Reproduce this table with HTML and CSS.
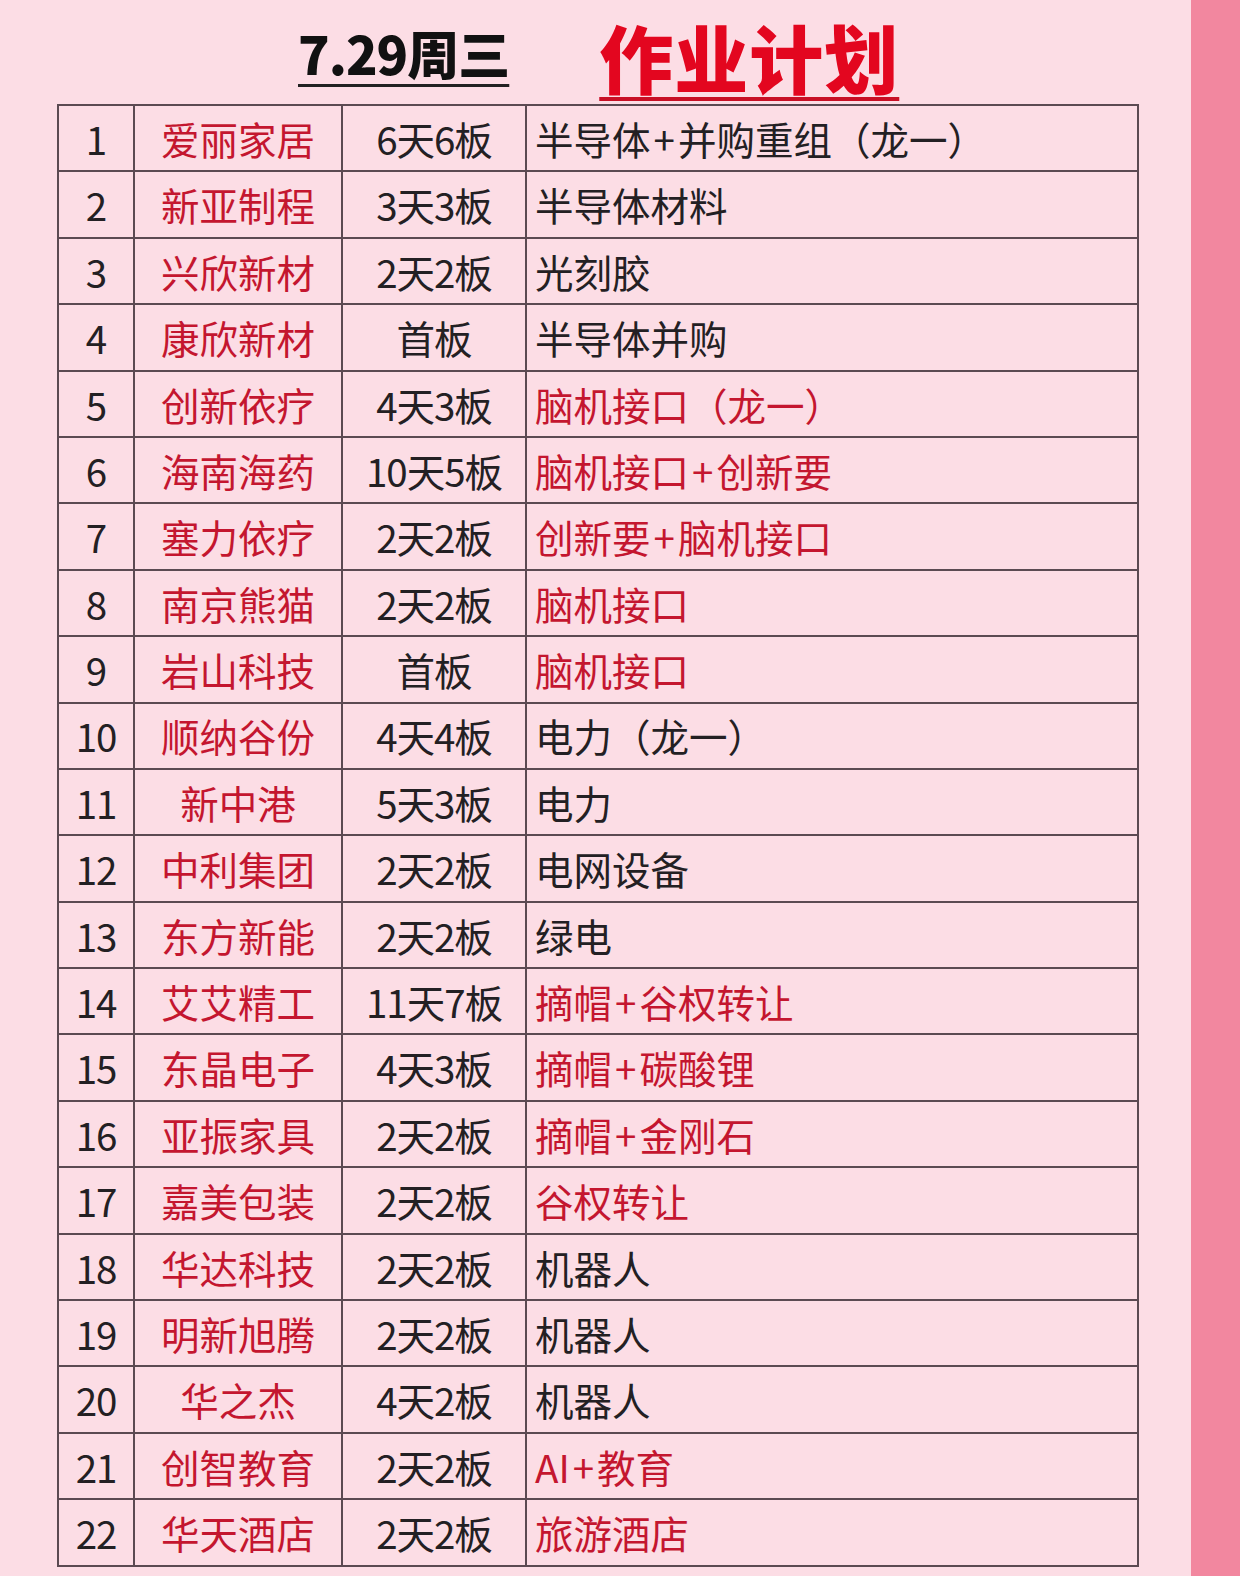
FILE: index.html
```html
<!DOCTYPE html>
<html lang="zh-CN">
<head>
<meta charset="utf-8">
<title>7.29周三 作业计划</title>
<link rel="stylesheet" href="styles.css">
</head>
<body>
<div class="page">
  <main class="sheet">
    <header class="title-row">
      <h2 class="date">7.29周三</h2>
      <h1 class="plan">作业计划</h1>
    </header>
    <table class="plan-table">
      <colgroup>
        <col class="c-no"><col class="c-name"><col class="c-board"><col class="c-theme">
      </colgroup>
      <tbody>
        <tr><td class="no">1</td><td class="name">爱丽家居</td><td class="board">6天6板</td><td class="theme">半导体<span class="plus">+</span>并购重组（龙一）</td></tr>
        <tr><td class="no">2</td><td class="name">新亚制程</td><td class="board">3天3板</td><td class="theme">半导体材料</td></tr>
        <tr><td class="no">3</td><td class="name">兴欣新材</td><td class="board">2天2板</td><td class="theme">光刻胶</td></tr>
        <tr><td class="no">4</td><td class="name">康欣新材</td><td class="board">首板</td><td class="theme">半导体并购</td></tr>
        <tr><td class="no">5</td><td class="name">创新依疗</td><td class="board">4天3板</td><td class="theme red">脑机接口（龙一）</td></tr>
        <tr><td class="no">6</td><td class="name">海南海药</td><td class="board">10天5板</td><td class="theme red">脑机接口<span class="plus">+</span>创新要</td></tr>
        <tr><td class="no">7</td><td class="name">塞力依疗</td><td class="board">2天2板</td><td class="theme red">创新要<span class="plus">+</span>脑机接口</td></tr>
        <tr><td class="no">8</td><td class="name">南京熊猫</td><td class="board">2天2板</td><td class="theme red">脑机接口</td></tr>
        <tr><td class="no">9</td><td class="name">岩山科技</td><td class="board">首板</td><td class="theme red">脑机接口</td></tr>
        <tr><td class="no">10</td><td class="name">顺纳谷份</td><td class="board">4天4板</td><td class="theme">电力（龙一）</td></tr>
        <tr><td class="no">11</td><td class="name">新中港</td><td class="board">5天3板</td><td class="theme">电力</td></tr>
        <tr><td class="no">12</td><td class="name">中利集团</td><td class="board">2天2板</td><td class="theme">电网设备</td></tr>
        <tr><td class="no">13</td><td class="name">东方新能</td><td class="board">2天2板</td><td class="theme">绿电</td></tr>
        <tr><td class="no">14</td><td class="name">艾艾精工</td><td class="board">11天7板</td><td class="theme red">摘帽<span class="plus">+</span>谷权转让</td></tr>
        <tr><td class="no">15</td><td class="name">东晶电子</td><td class="board">4天3板</td><td class="theme red">摘帽<span class="plus">+</span>碳酸锂</td></tr>
        <tr><td class="no">16</td><td class="name">亚振家具</td><td class="board">2天2板</td><td class="theme red">摘帽<span class="plus">+</span>金刚石</td></tr>
        <tr><td class="no">17</td><td class="name">嘉美包装</td><td class="board">2天2板</td><td class="theme red">谷权转让</td></tr>
        <tr><td class="no">18</td><td class="name">华达科技</td><td class="board">2天2板</td><td class="theme">机器人</td></tr>
        <tr><td class="no">19</td><td class="name">明新旭腾</td><td class="board">2天2板</td><td class="theme">机器人</td></tr>
        <tr><td class="no">20</td><td class="name">华之杰</td><td class="board">4天2板</td><td class="theme">机器人</td></tr>
        <tr><td class="no">21</td><td class="name">创智教育</td><td class="board">2天2板</td><td class="theme red">AI<span class="plus">+</span>教育</td></tr>
        <tr><td class="no">22</td><td class="name">华天酒店</td><td class="board">2天2板</td><td class="theme red">旅游酒店</td></tr>
      </tbody>
    </table>
  </main>
  <aside class="edge"></aside>
</div>
</body>
</html>
```

FILE: styles.css
```css
html, body {
  margin: 0;
  padding: 0;
}
body {
  background: #fcdde5;
  font-family: "Noto Sans CJK SC", "Noto Sans", sans-serif;
  color: #232023;
}
.page {
  display: grid;
  grid-template-columns: 1191px 49px;
  width: 1240px;
  min-height: 1576px;
}
.sheet {
  background: #fcdde5;
  padding: 0 0 0 57px;
}
.edge {
  background: #f2879f;
}
.title-row {
  display: flex;
  align-items: flex-end;
  height: 104px;
  padding-left: 241px;
  box-sizing: border-box;
}
.date {
  margin: 0 90px 25px 0;
  font-size: 52px;
  line-height: 1;
  font-weight: 900;
  color: #111;
  letter-spacing: -1px;
  text-decoration: underline;
  text-decoration-thickness: 3px;
  text-underline-offset: 9px;
  text-decoration-color: #222;
}
.plan {
  margin: 0 0 11px 0;
  font-size: 74px;
  line-height: 1;
  font-weight: 900;
  color: #e3061f;
  letter-spacing: 1px;
  text-decoration: underline;
  text-decoration-thickness: 4px;
  text-underline-offset: 9px;
  text-decoration-color: #c80f25;
}
.plan-table {
  border-collapse: collapse;
  width: 1080px;
  table-layout: fixed;
  border: 2px solid #5b4a52;
}
.c-no { width: 76px; }
.c-name { width: 208px; }
.c-board { width: 184px; }
.c-theme { width: 612px; }
.plan-table td {
  height: 64.4px;
  border: 2px solid #5b4a52;
  padding: 0;
  font-size: 38.5px;
  line-height: 1;
  white-space: nowrap;
  overflow: hidden;
}
.no, .name, .board {
  text-align: center;
}
.no, .board {
  color: #232023;
  letter-spacing: -1px;
}
.name {
  color: #c4162f;
}
.theme {
  padding-left: 8px !important;
  color: #232023;
}
.theme.red {
  color: #c4162f;
}
.plus {
  margin: 0 3px;
}
```
